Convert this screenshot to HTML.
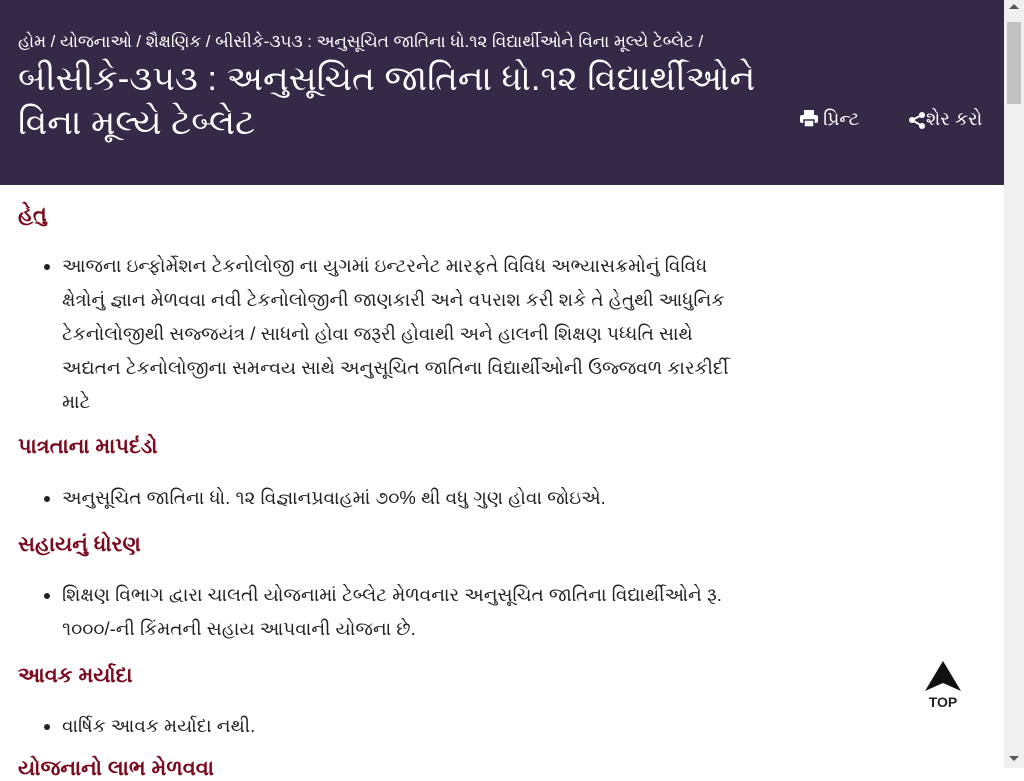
<!DOCTYPE html>
<html><head><meta charset="utf-8"><style>
body{margin:0;width:1024px;height:768px;overflow:hidden;background:#fff;font-family:"Liberation Sans","Noto Sans CJK JP",sans-serif;position:relative}
.hdr{position:absolute;left:0;top:0;width:1004px;height:185px;background:#342a48;color:#fff}
.bc{position:absolute;left:18px;top:32px;font-size:16.8px;white-space:nowrap}
.tt{position:absolute;left:18px;top:57px;font-size:34.5px;line-height:44px;width:760px}
.act{position:absolute;top:108px;font-size:18.5px}
.sb{position:absolute;right:0;top:0;width:20px;height:768px;background:#f0f0f0}
.th{position:absolute;right:3px;top:22px;width:14px;height:82px;background:#c1c1c1}
h3{position:absolute;left:18px;margin:0;font-size:21px;color:#7a0a1e;font-weight:bold}
ul{position:absolute;left:18px;margin:0;padding-left:44px;width:668px;font-size:18.5px;line-height:34px;color:#222}
</style></head><body>
<div class="hdr">
<div class="bc">હોમ / યોજનાઓ / શૈક્ષણિક / બીસીકે-૩૫૩ : અનુસૂચિત જાતિના ધો.૧૨ વિદ્યાર્થીઓને વિના મૂલ્યે ટેબ્લેટ /</div>
<div class="tt">બીસીકે-૩૫૩ : અનુસૂચિત જાતિના ધો.૧૨ વિદ્યાર્થીઓને વિના મૂલ્યે ટેબ્લેટ</div>
<div class="act" style="left:800px"><svg width="18" height="17" viewBox="0 0 18 17" style="vertical-align:-2px"><rect x="4" y="0" width="10" height="5" fill="#fff"/><rect x="0" y="5" width="18" height="8" rx="2" fill="#fff"/><rect x="4" y="10" width="10" height="7" fill="#fff" stroke="#342a48" stroke-width="1.5"/></svg> પ્રિન્ટ</div>
<div class="act" style="left:908px"><svg width="18" height="18" viewBox="0 0 18 18" style="vertical-align:-4px"><circle cx="14" cy="4" r="3" fill="#fff"/><circle cx="4" cy="9" r="3" fill="#fff"/><circle cx="14" cy="15" r="3" fill="#fff"/><path d="M14 4L4 9L14 15" stroke="#fff" stroke-width="2" fill="none"/></svg>શેર કરો</div>
</div>
<h3 style="top:203px">હેતુ</h3>
<ul style="top:249px"><li>આજના ઇન્ફોર્મેશન ટેકનોલોજી ના યુગમાં ઇન્ટરનેટ મારફતે વિવિધ અભ્યાસક્રમોનું વિવિધ ક્ષેત્રોનું જ્ઞાન મેળવવા નવી ટેકનોલોજીની જાણકારી અને વપરાશ કરી શકે તે હેતુથી આધુનિક ટેકનોલોજીથી સજ્જયંત્ર / સાધનો હોવા જરૂરી હોવાથી અને હાલની શિક્ષણ પધ્ધતિ સાથે અદ્યતન ટેકનોલોજીના સમન્વય સાથે અનુસૂચિત જાતિના વિદ્યાર્થીઓની ઉજ્જવળ કારકીર્દી માટે</li></ul>
<h3 style="top:435px">પાત્રતાના માપદંડો</h3>
<ul style="top:481px"><li>અનુસૂચિત જાતિના ધો. ૧૨ વિજ્ઞાનપ્રવાહમાં ૭૦% થી વધુ ગુણ હોવા જોઇએ.</li></ul>
<h3 style="top:533px">સહાયનું ધોરણ</h3>
<ul style="top:578px"><li>શિક્ષણ વિભાગ દ્વારા ચાલતી યોજનામાં ટેબ્લેટ મેળવનાર અનુસૂચિત જાતિના વિદ્યાર્થીઓને રૂ. ૧૦૦૦/-ની કિંમતની સહાય આપવાની યોજના છે.</li></ul>
<h3 style="top:664px">આવક મર્યાદા</h3>
<ul style="top:709px"><li>વાર્ષિક આવક મર્યાદા નથી.</li></ul>
<h3 style="top:757px">યોજનાનો લાભ મેળવવા</h3>
<div style="position:absolute;left:923px;top:661px;width:40px;text-align:center">
<svg width="36" height="30" viewBox="0 0 36 30"><path d="M18 0L36 30L18 22L0 30Z" fill="#111"/></svg>
<div style="font-size:14px;font-weight:bold;color:#222;margin-top:-2px">TOP</div></div>
<div class="sb"><div class="th"></div>
<div style="position:absolute;left:5px;top:4px;border:5px solid transparent;border-bottom-color:#555;border-top:0"></div>
<div style="position:absolute;left:5px;top:756px;border:5px solid transparent;border-top-color:#555;border-bottom:0"></div></div>
</body></html>
